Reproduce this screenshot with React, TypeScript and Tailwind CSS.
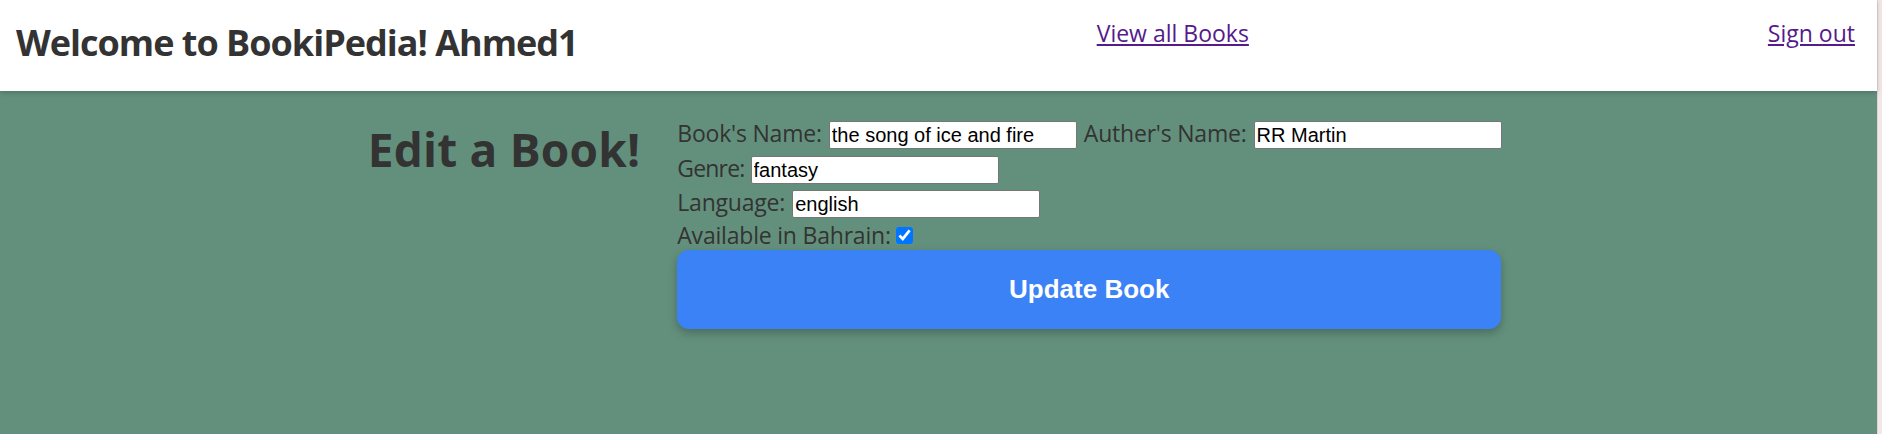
import React from "react";

const sans = { fontFamily: '"Open Sans", "Noto Sans", sans-serif' };

export default function App() {
  return (
    <div className="flex min-h-screen w-full bg-[#63907c]">
      <div className="flex min-h-screen flex-1 flex-col">
        <header
          className="relative z-10 flex h-[91px] items-start justify-between bg-white pl-[16px] pr-[22px] shadow-[0_2px_5px_rgba(0,0,0,0.18)]"
          style={sans}
        >
          <h1 className="mt-[19px] whitespace-nowrap text-[36px] font-bold leading-[48px] tracking-[-1px] text-[#333333]">
            Welcome to BookiPedia! Ahmed1
          </h1>
          <a href="#" className="mt-[19px] whitespace-nowrap text-[23px] leading-[28px] text-[#551a8b] underline">
            View all Books
          </a>
          <a href="#" className="mt-[19px] whitespace-nowrap text-[23px] leading-[28px] text-[#551a8b] underline">
            Sign out
          </a>
        </header>

        <main className="flex flex-1 items-start justify-center gap-[37px] pr-[8px] pt-[27px] text-[#333333]" style={sans}>
          <h2 className="mt-[4px] shrink-0 whitespace-nowrap text-[46px] font-bold leading-[54px] tracking-[0.2px]">
            Edit a Book!
          </h2>
          <form className="flex w-[824px] shrink-0 flex-col" onSubmit={(e) => e.preventDefault()}>
            <div className="flex h-[34.5px] items-center gap-[7px]">
              <Label text="Book's Name:" />
              <Field value="the song of ice and fire" />
              <Label text="Auther's Name:" />
              <Field value="RR Martin" />
            </div>
            <div className="flex h-[34.5px] items-center gap-[6px]">
              <label className="mb-[4px] shrink-0 whitespace-nowrap text-[23px] leading-[32px] tracking-[-0.8px]">
                Genre:
              </label>
              <Field value="fantasy" />
            </div>
            <div className="flex h-[34.5px] items-center gap-[7px]">
              <Label text="Language:" />
              <Field value="english" />
            </div>
            <div className="flex h-[28px] items-center gap-[5px]">
              <label className="mb-[2px] shrink-0 whitespace-nowrap text-[23px] leading-[32px] tracking-[-0.2px]">
                Available in Bahrain:
              </label>
              <input
                type="checkbox"
                defaultChecked
                className="m-0 h-[17px] w-[17px] accent-[#0075ff]"
              />
            </div>
            <button
              type="submit"
              className="h-[79px] w-full rounded-[12px] bg-[#3b82f6] text-[26px] font-bold text-white shadow-[0_4px_10px_rgba(0,0,0,0.25)]"
              style={{ fontFamily: '"Liberation Sans", Arial, sans-serif' }}
            >
              Update Book
            </button>
          </form>
        </main>
      </div>
      <div className="w-[5px] border-l border-[#e2d4d4] bg-[#f1e7e7]" />
    </div>
  );
}

function Label({ text }: { text: string }) {
  return (
    <label className="mb-[4px] shrink-0 whitespace-nowrap text-[23px] leading-[32px] tracking-[-0.2px]">
      {text}
    </label>
  );
}

function Field({ value }: { value: string }) {
  return (
    <input
      type="text"
      defaultValue={value}
      className="h-[28px] w-[248px] shrink-0 rounded-[2px] border border-[#767676] bg-white px-[2px] text-[20px] text-black outline-none"
      style={{ fontFamily: '"Liberation Sans", Arial, sans-serif' }}
    />
  );
}
